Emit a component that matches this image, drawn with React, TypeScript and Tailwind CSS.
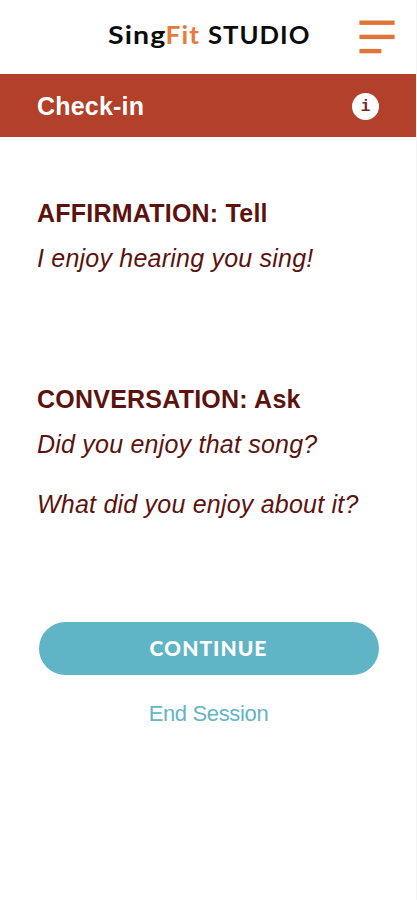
import React from 'react';

const sections = [
  {
    title: 'AFFIRMATION: Tell',
    lines: ['I enjoy hearing you sing!'],
    className: 'h-[186px]',
  },
  {
    title: 'CONVERSATION: Ask',
    lines: ['Did you enjoy that song?', 'What did you enjoy about it?'],
    className: 'h-[238px]',
  },
];

// Each part of the wordmark is stretched to its own width
function Logo() {
  return (
    <svg
      width="203"
      height="34"
      viewBox="0 0 203 34"
      className="font-['Lato',sans-serif] text-[25px] font-bold tracking-[1px]"
      role="img"
      aria-label="SingFit STUDIO"
    >
      <text x="0" y="26" textLength="58.5" lengthAdjust="spacingAndGlyphs" fill="#0c0c0c">
        Sing
      </text>
      <text x="57.5" y="26" textLength="34.5" lengthAdjust="spacingAndGlyphs" fill="#e57b3c">
        Fit
      </text>
      <text x="100" y="26" textLength="102.5" lengthAdjust="spacingAndGlyphs" fill="#0c0c0c">
        STUDIO
      </text>
    </svg>
  );
}

function MenuIcon() {
  return (
    <svg width="36" height="34" viewBox="0 0 36 34" fill="#e07436" aria-hidden="true">
      <rect x="0.4" y="0.5" width="35.2" height="4.4" />
      <rect x="0.4" y="14.7" width="35.2" height="4.4" />
      <rect x="0.4" y="28.9" width="22" height="4.4" />
    </svg>
  );
}

export default function App() {
  return (
    <div className="h-[900px] w-[417px] overflow-hidden border-r border-[#f4f4f4] bg-white font-['Liberation_Sans',Arial,sans-serif]">
      <header className="flex h-[74px] items-start pl-[108px]">
        <h1 className="mt-[18px] w-[251px]">
          <Logo />
        </h1>
        <button type="button" aria-label="Menu" className="mt-5">
          <MenuIcon />
        </button>
      </header>

      <div className="flex h-[63px] items-center justify-between bg-[#b2402a] px-[37px] text-white">
        <h2 className="text-[25px] leading-7 font-bold tracking-[0.2px]">Check-in</h2>
        <button
          type="button"
          aria-label="Info"
          className="mt-px flex h-[27px] w-[27px] items-center justify-center rounded-full bg-white pt-px font-['Liberation_Mono',monospace] text-base leading-none font-bold text-[#74261c]"
        >
          i
        </button>
      </div>

      <main className="px-[37px] pt-[61px] text-[#5c130e]">
        {sections.map((section) => (
          <section key={section.title} className={section.className}>
            <h3 className="text-[25px] leading-[30px] font-bold tracking-[0.23px] whitespace-nowrap">
              {section.title}
            </h3>
            <div className="mt-[15px] flex flex-col gap-[30px]">
              {section.lines.map((line) => (
                <p
                  key={line}
                  className="text-[25px] leading-[30px] tracking-[0.22px] whitespace-nowrap italic"
                >
                  {line}
                </p>
              ))}
            </div>
          </section>
        ))}
      </main>

      <div className="flex flex-col items-center pl-px">
        <button
          type="button"
          className="h-[53px] w-[340px] rounded-full bg-[#5fb5c6] pb-0.5 font-['Lato',sans-serif] text-[21px] font-black tracking-[1px] text-white"
        >
          CONTINUE
        </button>
        <button
          type="button"
          className="mt-6 text-[22px] leading-[30px] tracking-[-0.35px] text-[#65b5c7]"
        >
          End Session
        </button>
      </div>
    </div>
  );
}
